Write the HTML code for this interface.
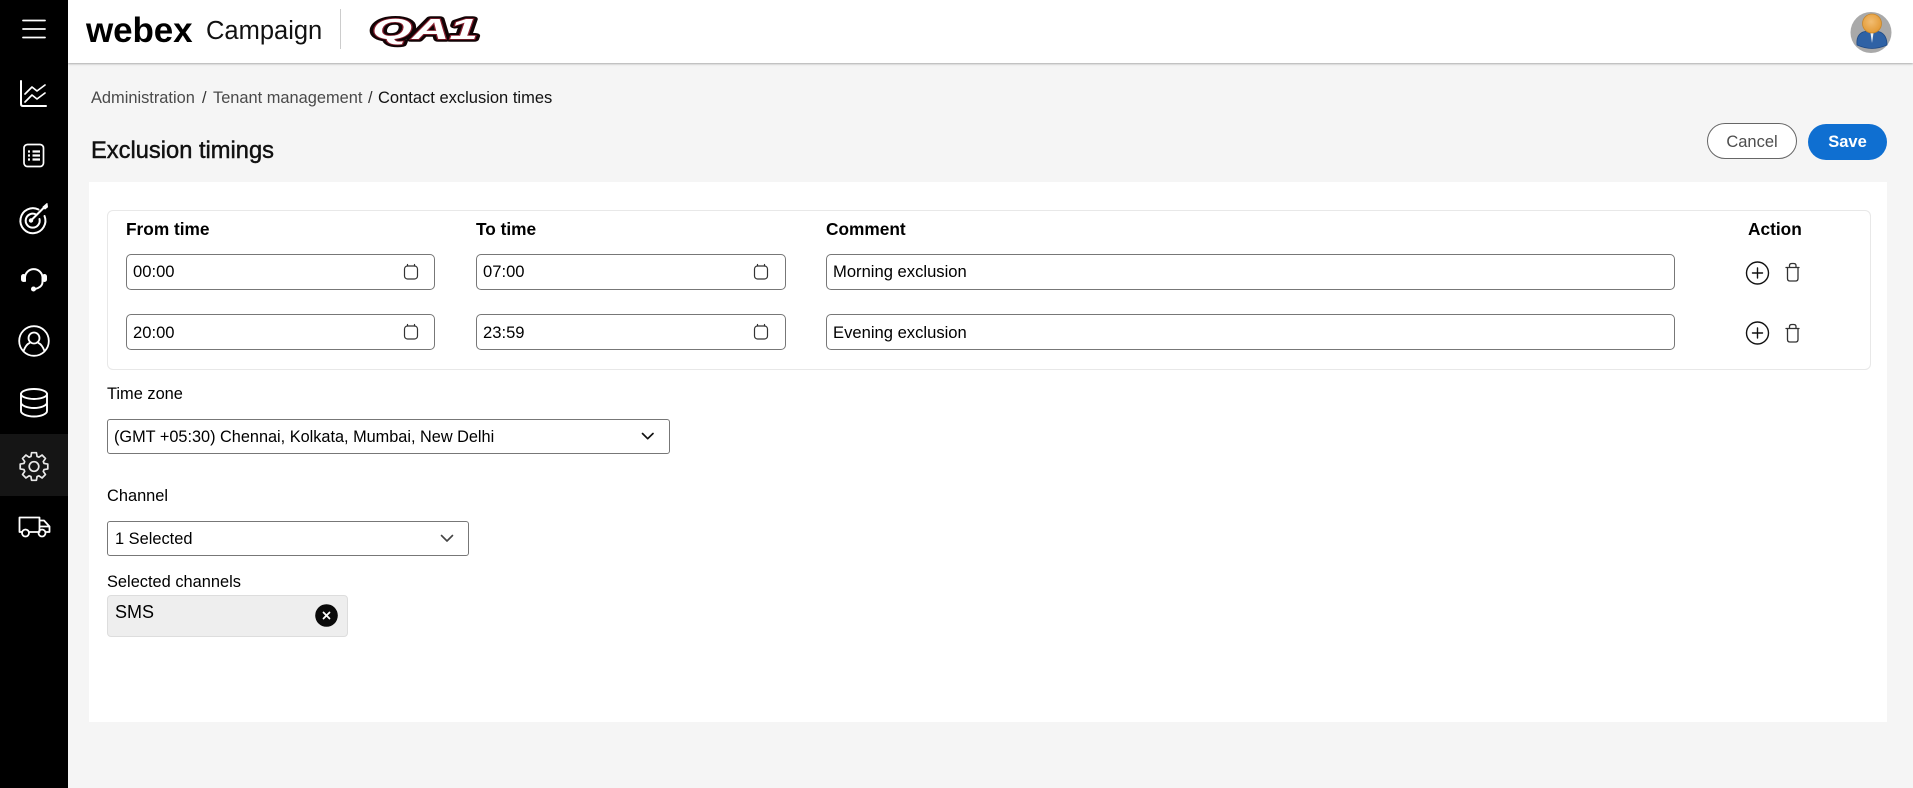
<!DOCTYPE html>
<html lang="en"><head><meta charset="utf-8"><title>Exclusion timings</title>
<style>
*{box-sizing:border-box}
html,body{margin:0;padding:0}
body{width:1913px;height:788px;overflow:hidden;background:#f5f5f5;position:relative;font-family:"Liberation Sans",Arial,sans-serif;color:#000;font-size:16px}
.a{position:absolute;white-space:nowrap}
.t{position:absolute;white-space:nowrap;line-height:20px;height:20px}
#side{position:absolute;left:0;top:0;width:68px;height:788px;background:#000}
#hdr{position:absolute;left:68px;top:0;width:1845px;height:63px;background:#fff;box-shadow:0 1px 2px rgba(0,0,0,.3)}
#panel{position:absolute;left:89px;top:182px;width:1798px;height:540px;background:#fff}
#card{position:absolute;left:107px;top:210px;width:1764px;height:160px;background:#fff;border:1px solid #e8e8e8;border-radius:6px}
.inp{position:absolute;height:36px;background:#fff;border:1px solid #777;border-radius:5px}
.sel{position:absolute;background:#fff;border:1px solid #777;border-radius:3px}
.h{font-weight:bold;font-size:17.300px}
.v{font-size:16.600px}
.l{font-size:16.400px}
svg{position:absolute;overflow:visible}
</style></head><body>
<div id="side"></div>
<div class="a" style="left:0;top:434px;width:68px;height:62px;background:#151515"></div>

<!-- sidebar icons -->
<svg style="left:0;top:0" width="68" height="560" fill="none" stroke="#fff" stroke-width="2" stroke-linecap="round" stroke-linejoin="round">
<path d="M23 20.500H45M23 29H45M23 37.500H45" stroke-width="1.800"/>
<path d="M21 81V104Q21 106 23 106H46"/>
<path d="M25 94L32 87L37 91L45 85M25 102L32 95L37 99L45 93" stroke-width="1.700"/>
<rect x="24" y="144.500" width="19.500" height="22" rx="3.500" stroke-width="1.700"/>
<path d="M28 151.500H30M32.500 151.500H40M28 155.500H30M32.500 155.500H40M28 159.500H30M32.500 159.500H40" stroke-width="2.200" stroke-linecap="butt"/>
<path d="M38.500 209.500A12.500 12.500 0 1 0 44.500 216" stroke-width="2"/>
<path d="M36 214.500A7 7 0 1 0 39.500 219" stroke-width="2"/>
<path d="M31 220.500L44 207.500" stroke-width="2"/>
<circle cx="31" cy="220.500" r="2.200" fill="#fff" stroke="none"/>
<path d="M43 207L47 203.500L47.500 207L45 209Z" fill="#fff" stroke-width="1"/>
<path d="M25 281V277A8.800 8.800 0 0 1 42.500 277V282Q42.500 286 38 288L34 289.500"/>
<rect x="21" y="274" width="5" height="8" rx="2.500" fill="#fff" stroke="none"/>
<rect x="42" y="274" width="5" height="8" rx="2.500" fill="#fff" stroke="none"/>
<circle cx="33.500" cy="289" r="2.500" fill="#fff" stroke="none"/>
<circle cx="34" cy="341" r="14.800" stroke-width="1.800"/>
<circle cx="34" cy="338" r="5.500" stroke-width="1.800"/>
<path d="M23.500 351Q26 344.500 29.500 343M44.500 351Q42 344.500 38.500 343" stroke-width="1.800"/>
<ellipse cx="34" cy="394" rx="13" ry="5" stroke-width="1.900"/>
<path d="M21 394V411C21 414 27 416.500 34 416.500S47 414 47 411V394M21 402.500C21 405.500 27 408 34 408S47 405.500 47 402.500" stroke-width="1.900"/>
<path transform="translate(34 466.500)" stroke="#e8e8e8" stroke-width="1.700" d="M-2.430 -13.790L2.430 -13.790L3.070 -10.040L4.930 -9.270L8.030 -11.470L11.470 -8.030L9.270 -4.930L10.040 -3.070L13.790 -2.430L13.790 2.430L10.040 3.070L9.270 4.930L11.470 8.030L8.030 11.470L4.930 9.270L3.070 10.040L2.430 13.790L-2.430 13.790L-3.070 10.040L-4.930 9.270L-8.030 11.470L-11.470 8.030L-9.270 4.930L-10.040 3.070L-13.790 2.430L-13.790 -2.430L-10.040 -3.070L-9.270 -4.930L-11.470 -8.030L-8.030 -11.470L-4.930 -9.270L-3.070 -10.040Z"/>
<circle cx="34" cy="466.500" r="4.800" stroke="#e8e8e8" stroke-width="1.700"/>
<path d="M22 532H19.500V517.500H39.500V532H30M39.500 532H38M39.500 520.500H44L49.500 526.500V532H46.500M40 526.500H49" stroke-width="1.800"/>
<circle cx="25.500" cy="533" r="3.500" stroke-width="1.800"/>
<circle cx="42" cy="533" r="3.500" stroke-width="1.800"/>
</svg>

<div id="hdr"></div>
<div class="a" style="left:86px;top:9px;font-size:35px;line-height:44px;font-weight:bold;letter-spacing:-.1px">webex</div>
<div class="a" style="left:206px;top:15px;font-size:25.500px;line-height:32px;color:#111">Campaign</div>
<div class="a" style="left:340px;top:9px;width:1px;height:40px;background:#ccc"></div>
<svg style="left:368px;top:15px" width="114" height="28">
<text x="4" y="24" textLength="106" lengthAdjust="spacingAndGlyphs" font-family="Liberation Sans" font-weight="bold" font-style="italic" font-size="29" fill="#fff" stroke="#120305" stroke-width="5.500" stroke-linejoin="round" paint-order="stroke">QA1</text>
<text x="4" y="24" textLength="106" lengthAdjust="spacingAndGlyphs" font-family="Liberation Sans" font-weight="bold" font-style="italic" font-size="29" fill="#fff" stroke="#8a2030" stroke-width="1.500" paint-order="stroke">QA1</text>
</svg>

<!-- avatar -->
<svg style="left:1851px;top:12px" width="40" height="40">
<defs><radialGradient id="hd" cx=".45" cy=".4" r=".6"><stop offset="0" stop-color="#f2bd72"/><stop offset="1" stop-color="#e39a35"/></radialGradient></defs>
<circle cx="20" cy="20.500" r="20.500" fill="#a9a9a9"/>
<path d="M6 33Q5 23 12 20L21 18L29 20Q36 23 36 33Q28 36.500 21 36.500T6 33Z" fill="#2f62a5" stroke="#1f4a85" stroke-width=".8"/>
<path d="M19.500 21H22.500L21 31Z" fill="#eef2f6"/>
<circle cx="21" cy="11.500" r="9.500" fill="url(#hd)" stroke="#c8862a" stroke-width=".8"/>
</svg>

<div class="t" style="left:91px;top:88px;font-size:16.400px;color:#4a4a4a">Administration</div>
<div class="t" style="left:202px;top:88px;font-size:16.400px;color:#333">/</div>
<div class="t" style="left:213px;top:88px;font-size:16.400px;color:#4a4a4a">Tenant management</div>
<div class="t" style="left:368px;top:88px;font-size:16.400px;color:#333">/</div>
<div class="t" style="left:378px;top:88px;font-size:16.500px;color:#111">Contact exclusion times</div>
<div class="a" style="left:91px;top:137px;font-size:23.700px;line-height:28px;color:#111;-webkit-text-stroke:.45px #111">Exclusion timings</div>

<div class="a" style="left:1707px;top:123px;width:90px;height:36px;background:#fff;border:1px solid #666;border-radius:18px;text-align:center;line-height:36px;font-size:16.500px;color:#4d4d4d">Cancel</div>
<div class="a" style="left:1808px;top:124px;width:79px;height:36px;background:#0f6fd1;border-radius:18px;text-align:center;line-height:36px;font-size:16.500px;font-weight:bold;color:#fff">Save</div>

<div id="panel"></div>
<div id="card"></div>

<div class="t h" style="left:126px;top:219px">From time</div>
<div class="t h" style="left:476px;top:219px">To time</div>
<div class="t h" style="left:826px;top:219px">Comment</div>
<div class="t h" style="left:1748px;top:219px">Action</div>

<div class="inp" style="left:126px;top:254px;width:309px"></div>
<div class="inp" style="left:476px;top:254px;width:310px"></div>
<div class="inp" style="left:826px;top:254px;width:849px"></div>
<div class="inp" style="left:126px;top:314px;width:309px"></div>
<div class="inp" style="left:476px;top:314px;width:310px"></div>
<div class="inp" style="left:826px;top:314px;width:849px"></div>

<div class="t v" style="left:133px;top:262px">00:00</div>
<div class="t v" style="left:483px;top:262px">07:00</div>
<div class="t v" style="left:833px;top:262px">Morning exclusion</div>
<div class="t v" style="left:133px;top:323px">20:00</div>
<div class="t v" style="left:483px;top:323px">23:59</div>
<div class="t v" style="left:833px;top:323px">Evening exclusion</div>

<svg style="left:0;top:0" width="1913" height="560" fill="none" stroke="#333" stroke-width="1.200" stroke-linecap="round" stroke-linejoin="round">
<rect x="404.500" y="266" width="13" height="13" rx="3"/><path d="M407.500 264.500V266M414.500 264.500V266"/>
<rect x="754.500" y="266" width="13" height="13" rx="3"/><path d="M757.500 264.500V266M764.500 264.500V266"/>
<rect x="404.500" y="326" width="13" height="13" rx="3"/><path d="M407.500 324.500V326M414.500 324.500V326"/>
<rect x="754.500" y="326" width="13" height="13" rx="3"/><path d="M757.500 324.500V326M764.500 324.500V326"/>
<g stroke="#111" stroke-width="1.400">
<circle cx="1757.500" cy="273" r="11"/><path d="M1757.500 268V278M1752.500 273H1762.500"/>
<circle cx="1757.500" cy="333" r="11"/><path d="M1757.500 328V338M1752.500 333H1762.500"/>
</g>
<g stroke="#333" stroke-width="1.300">
<path d="M1786 267.500H1799M1787.500 268V278.500Q1787.500 281 1790 281H1795.500Q1798 281 1798 278.500V268M1789.500 267V265.500Q1789.500 263.500 1792 263.500H1793.500Q1796 263.500 1796 265.500V267"/>
<path d="M1786 328.500H1799M1787.500 329V339.500Q1787.500 342 1790 342H1795.500Q1798 342 1798 339.500V329M1789.500 328V326.500Q1789.500 324.500 1792 324.500H1793.500Q1796 324.500 1796 326.500V328"/>
</g>
</svg>

<div class="t l" style="left:107px;top:384px">Time zone</div>
<div class="sel" style="left:107px;top:419px;width:563px;height:35px"></div>
<div class="t l" style="left:114px;top:427px;font-size:16.300px">(GMT +05:30) Chennai, Kolkata, Mumbai, New Delhi</div>
<div class="t l" style="left:107px;top:486px">Channel</div>
<div class="sel" style="left:107px;top:521px;width:362px;height:35px"></div>
<div class="t l" style="left:115px;top:529px">1 Selected</div>
<div class="t l" style="left:107px;top:572px">Selected channels</div>
<svg style="left:0;top:0" width="700" height="560" fill="none" stroke-linecap="round" stroke-linejoin="round">
<path d="M642.500 433.500L647.700 438.700L653 433.500" stroke="#111" stroke-width="1.700"/>
<path d="M441.500 535.500L447 541L452.500 535.500" stroke="#444" stroke-width="1.600"/>
</svg>
<div class="a" style="left:107px;top:595px;width:241px;height:42px;background:#eee;border:1px solid #ddd;border-radius:4px"></div>
<div class="t" style="left:115px;top:602px;font-size:18px">SMS</div>
<svg style="left:315px;top:604px" width="23" height="23" fill="none">
<circle cx="11.500" cy="11.500" r="11.300" fill="#0a0a0a"/>
<path d="M8.500 8.500L14.500 14.500M14.500 8.500L8.500 14.500" stroke="#fff" stroke-width="1.800" stroke-linecap="round"/>
</svg>
</body></html>
